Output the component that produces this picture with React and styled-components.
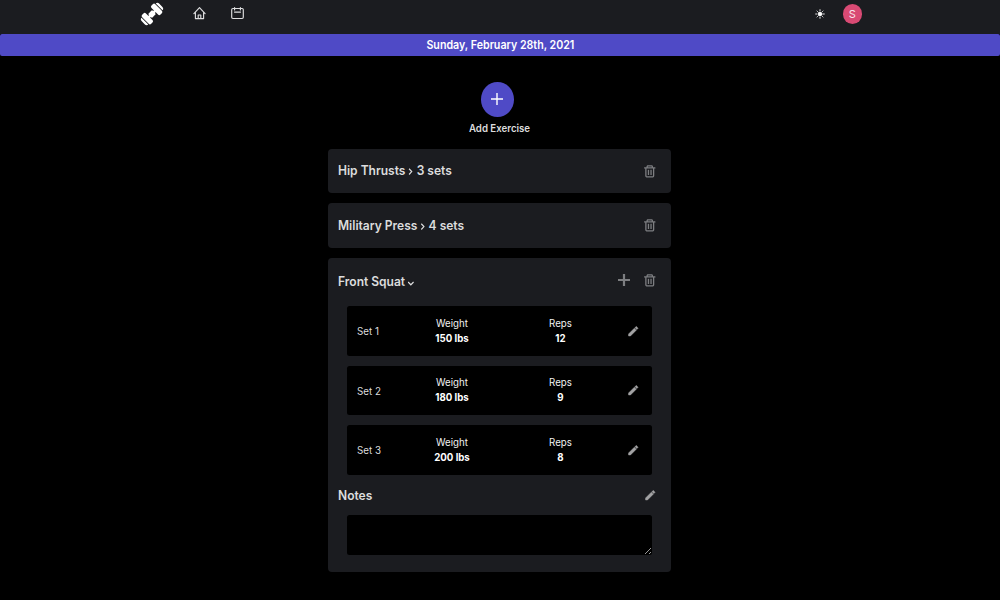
import React from "react";
import styled, { createGlobalStyle } from "styled-components";
import { CgTrash } from "react-icons/cg";

const GlobalStyle = createGlobalStyle`
  * { box-sizing: border-box; }
  body {
    margin: 0;
    background: #000;
    color: #dcdcdd;
    font-family: Inter, "Liberation Sans", sans-serif;
    overflow: hidden;
  }
  svg { display: block; flex: none; }
`;

const NavBar = styled.nav`
  height: 34px;
  padding: 0 138px 0 140px;
  display: flex;
  justify-content: space-between;
  background: #1b1c20;
`;

const NavGroup = styled.div`
  display: flex;
  align-items: flex-start;
`;

const NavIcon = styled.span`
  display: block;
  margin: ${(p) => p.$top}px 0 0 ${(p) => p.$left || 0}px;
  color: ${(p) => p.$color || "#dededf"};
`;

const Avatar = styled.div`
  width: 19.5px;
  height: 20px;
  margin: 4px 0 0 18px;
  border-radius: 50%;
  background: #d94a74;
  color: #f8e6ec;
  font-size: 11px;
  line-height: 21px;
  text-align: center;
`;

const DateBar = styled.div`
  height: 22.4px;
  border-radius: 2px;
  background: #4f4ac6;
  color: #fff;
  font-size: 11.6px;
  font-weight: 600;
  line-height: 23px;
  text-align: center;
`;

const Narrow = styled.span`
  display: inline-block;
  transform: scaleX(${(p) => p.$ratio || 0.94});
  transform-origin: ${(p) => p.$origin || "center"};
`;

const Page = styled.main`
  width: 343px;
  margin: 25.2px auto 0 328px;
  display: flex;
  flex-direction: column;
`;

const AddButton = styled.button`
  width: 33.5px;
  height: 35px;
  padding: 0;
  margin: 0 0 0 152.5px;
  border: 0;
  border-radius: 50%;
  background: #4f4ac6;
  color: #fff;
  display: flex;
  align-items: center;
  justify-content: center;
`;

const AddLabel = styled.div`
  height: 32.1px;
  padding-top: 4.8px;
  font-size: 10.3px;
  font-weight: 600;
  line-height: 14px;
  text-align: center;
`;

const Exercise = styled.section`
  height: ${(p) => (p.$open ? 314 : 44.5)}px;
  margin-bottom: 10.1px;
  padding: 0 9.5px;
  border-radius: 4px;
  background: #1b1c20;
`;

const Header = styled.header`
  height: ${(p) => p.$height}px;
  padding-right: ${(p) => p.$right || 4.5}px;
  padding-top: ${(p) => p.$top || 0}px;
  display: flex;
  align-items: center;
  justify-content: space-between;
`;

const Title = styled.h2`
  margin: 0;
  display: flex;
  align-items: center;
  gap: 2.7px;
  font-size: 12.8px;
  font-weight: 600;
  line-height: 18px;
  transform: scaleX(0.94);
  transform-origin: left;
`;

const Actions = styled.div`
  display: flex;
  align-items: center;
  gap: 12px;
  margin-top: ${(p) => p.$shift || 0}px;
  font-size: 15.5px;
  color: #7d7e81;
`;

const SetList = styled.div`
  display: flex;
  flex-direction: column;
  gap: 10px;
  padding: 0 9.5px;
`;

const SetRow = styled.div`
  height: 49.7px;
  padding: 1.6px 0 0 9.5px;
  display: grid;
  grid-template-columns: 40px 110px 107px 1fr;
  align-items: center;
  border-radius: 2.5px;
  background: #000;
  font-size: 10.4px;
`;

const Metric = styled.div`
  text-align: center;
  line-height: 14.8px;
  color: #f2f2f2;
  transform: scaleX(0.93);
`;

const Value = styled.strong`
  display: block;
  font-weight: 700;
  color: #fff;
`;

const PencilIcon = styled.svg`
  width: 12.5px;
  height: 12.5px;
  margin-bottom: 1.2px;
  fill: #a3a3a4;
  stroke: #a3a3a4;
  stroke-width: 1;
  stroke-linejoin: round;
  justify-self: center;
`;

const Notes = styled.textarea`
  display: block;
  width: 305px;
  height: 40px;
  margin: 0 9.5px;
  border: 0;
  border-radius: 2.5px;
  background: #000;
  color: #fff;
  resize: vertical;
`;

const Pencil = () => (
  <PencilIcon viewBox="0 0 24 24">
    <path d="M3 17.3V21H6.7L17.8 9.9 14.1 6.2ZM20.7 7C21.1 6.6 21.1 6 20.7 5.6L18.4 3.3C18 2.9 17.4 2.9 17 3.3L15.2 5.1 18.9 8.8Z" />
  </PencilIcon>
);

const Dumbbell = () => (
  <svg width="24" height="24" viewBox="-12 -12 24 24" fill="currentColor">
    <g transform="rotate(-45)">
      <rect x="-8" y="-1.3" width="16" height="2.6" />
      <rect x="-2.8" y="-2.7" width="5.6" height="5.4" rx="0.7" />
      <rect x="-9.3" y="-6.4" width="5.4" height="12.8" rx="1.8" />
      <rect x="3.9" y="-6.4" width="5.4" height="12.8" rx="1.8" />
      <path d="M-10.1-4.8Q-12.4-4.6-12.4-2V2Q-12.4 4.6-10.1 4.8ZM10.1-4.8Q12.4-4.6 12.4-2V2Q12.4 4.6 10.1 4.8Z" />
    </g>
  </svg>
);

const House = () => (
  <svg width="13" height="13" viewBox="0 0 13 13" fill="none" stroke="currentColor" strokeWidth="1.15" strokeLinecap="round" strokeLinejoin="round">
    <path d="M.9 6.6 6.5.6 12.1 6.6M2.4 5.4V11.6H10.6V5.4M5.2 11.6V8H7.8V11.6" />
  </svg>
);

const Calendar = () => (
  <svg width="13" height="13" viewBox="0 0 13 13" fill="none" stroke="currentColor" strokeWidth="1.15" strokeLinecap="round">
    <rect x=".7" y="1.5" width="11.6" height="10" rx="1.2" />
    <path d="M3.6.6V2.9M9.4.6V2.9M3.5 5.1H9.5" />
  </svg>
);

const Sun = () => (
  <svg width="10" height="10" viewBox="-5 -5 10 10" fill="currentColor" stroke="currentColor" strokeWidth=".9" strokeLinecap="round">
    <circle r="1.9" />
    <path d="M0-4.3V-3.4M0 3.4V4.3M-4.3 0H-3.4M3.4 0H4.3M-3-3-2.5-2.5M3-3 2.5-2.5M-3 3-2.5 2.5M3 3 2.5 2.5" />
  </svg>
);

const Plus = ({ weight }) => (
  <svg width="12" height="12" viewBox="0 0 12 12" stroke="currentColor" strokeWidth={weight}>
    <path d="M6 0V12M0 6H12" />
  </svg>
);

const ArrowRight = () => (
  <svg width="6.5" height="8" viewBox="0 0 6.5 8" fill="none" stroke="currentColor" strokeWidth="1.25">
    <path d="M1.6 1.7 4.4 4.6 1.6 7.5" />
  </svg>
);

const ArrowDown = () => (
  <svg width="7" height="8" viewBox="0 0 7 8" fill="none" stroke="currentColor" strokeWidth="1.2">
    <path d="M.6 4 3.5 6.8 6.4 4" />
  </svg>
);

const collapsed = [
  { name: "Hip Thrusts", sets: 3 },
  { name: "Military Press", sets: 4 },
];

const sets = [
  { weight: 150, reps: 12 },
  { weight: 180, reps: 9 },
  { weight: 200, reps: 8 },
];

export default function App() {
  return (
    <>
      <GlobalStyle />
      <NavBar>
        <NavGroup>
          <NavIcon $top={2} $color="#fff"><Dumbbell /></NavIcon>
          <NavIcon $top={7} $left={29}><House /></NavIcon>
          <NavIcon $top={7} $left={25}><Calendar /></NavIcon>
        </NavGroup>
        <NavGroup>
          <NavIcon $top={9.4} $color="#fff"><Sun /></NavIcon>
          <Avatar>S</Avatar>
        </NavGroup>
      </NavBar>
      <DateBar><Narrow $ratio={0.92}>Sunday, February 28th, 2021</Narrow></DateBar>
      <Page>
        <AddButton><Plus weight={1.4} /></AddButton>
        <AddLabel><Narrow>Add Exercise</Narrow></AddLabel>
        {collapsed.map((e) => (
          <Exercise key={e.name}>
            <Header $height={44.5} $top={0.8}>
              <Title><span>{e.name}</span><ArrowRight /><span>{e.sets} sets</span></Title>
              <Actions><CgTrash /></Actions>
            </Header>
          </Exercise>
        ))}
        <Exercise $open>
          <Header $height={48}>
            <Title><span>Front Squat</span><ArrowDown /></Title>
            <Actions $shift={-3}><Plus weight={2.2} /><CgTrash /></Actions>
          </Header>
          <SetList>
            {sets.map((s, i) => (
              <SetRow key={s.weight}>
                <div><Narrow $origin="left">Set {i + 1}</Narrow></div>
                <Metric>Weight<Value>{s.weight} lbs</Value></Metric>
                <Metric>Reps<Value>{s.reps}</Value></Metric>
                <Pencil />
              </SetRow>
            ))}
          </SetList>
          <Header $height={39.6} $right={5.5} $top={2.8}>
            <Title>Notes</Title>
            <Pencil />
          </Header>
          <Notes />
        </Exercise>
      </Page>
    </>
  );
}
